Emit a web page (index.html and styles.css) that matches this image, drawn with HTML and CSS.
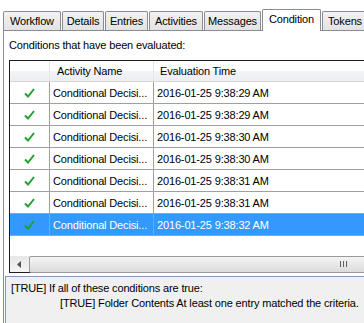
FILE: index.html
```html
<!DOCTYPE html>
<html lang="en">
<head>
  <meta charset="UTF-8" />
  <title>Condition</title>
  <link rel="stylesheet" href="styles.css">
</head>
<body>
  <div class="window">
    <div class="tabs">
      <div class="tab w-workflow">Workflow</div>
      <div class="tab w-details">Details</div>
      <div class="tab w-entries">Entries</div>
      <div class="tab w-activities">Activities</div>
      <div class="tab w-messages">Messages</div>
      <div class="tab active w-condition">Condition</div>
      <div class="tab w-tokens">Tokens</div>
    </div>

    <div class="page">
      <div class="caption">Conditions that have been evaluated:</div>

      <div class="list">
        <div class="row head">
          <div class="cell"></div>
          <div class="cell name">Activity Name</div>
          <div class="cell time">Evaluation Time</div>
          <div class="cell"></div>
        </div>
        <div id="rows"></div>
        <div class="filler"></div>
        <div class="hscroll">
          <div class="arrow">
            <svg width="4" height="7" viewBox="0 0 4 7"><path d="M4 0 L0 3.5 L4 7 Z" fill="#505050"/></svg>
          </div>
          <div class="thumb"><span class="grip"></span></div>
        </div>
      </div>

      <div class="details">
        <div>[TRUE] If all of these conditions are true:</div>
        <div class="indent">[TRUE] Folder Contents At least one entry matched the criteria.</div>
      </div>
    </div>
  </div>

  <script>
    const times = ['9:38:29', '9:38:29', '9:38:30', '9:38:30', '9:38:31', '9:38:31', '9:38:32'];
    const rows = document.getElementById('rows');
    const check = '<svg width="11" height="10" viewBox="0 0 11 10"><path d="M1 5.5 L4 8.5 L10 1" fill="none" stroke="#1fa22c" stroke-width="2"/></svg>';

    times.forEach((t, i) => {
      const row = document.createElement('div');
      row.className = 'row' + (i === times.length - 1 ? ' selected' : '');
      row.innerHTML = `
        <div class="cell icon">${check}</div>
        <div class="cell name">Conditional Decisi...</div>
        <div class="cell time">2016-01-25 ${t} AM</div>
        <div class="cell"></div>
      `;
      rows.appendChild(row);
    });
  </script>
</body>
</html>
```

FILE: styles.css
```css
body {
  margin: 0;
  background: #fff;
  font-family: "Liberation Sans", Arial, sans-serif;
  font-size: 11px;
  letter-spacing: -0.15px;
  color: #000;
  overflow: hidden;
}
.window {
  width: 440px;
  height: 323px;
  padding-left: 3px;
}
.tabs {
  display: flex;
  align-items: flex-end;
  height: 30px;
}
.tab {
  box-sizing: border-box;
  height: 19px;
  padding-top: 3px;
  text-align: center;
  white-space: nowrap;
  border: 1px solid #898c95;
  border-bottom: none;
  border-radius: 2px 2px 0 0;
  background: linear-gradient(#f2f2f2, #e3e3e3);
}
.tab + .tab {
  margin-left: 1px;
}
.tab.active {
  height: 22px;
  margin-bottom: -1px;
  padding-top: 3px;
  background: #fff;
  position: relative;
  z-index: 1;
}
.w-workflow { width: 58px; }
.w-details { width: 42px; }
.w-entries { width: 43px; }
.w-activities { width: 54px; }
.w-messages { width: 57px; }
.w-condition { width: 59px; }
.w-tokens { width: 50px; text-align: left; padding-left: 5px; }

.page {
  border: 1px solid #898c95;
  border-right: none;
  height: 300px;
  padding: 8px 0 0 0;
  box-sizing: border-box;
}
.caption {
  padding-left: 5px;
  line-height: 13px;
  margin-bottom: 8px;
}
.list {
  margin-left: 5px;
  border: 1px solid #1e1e1e;
  border-right: none;
  background: #fff;
}
.row {
  display: grid;
  grid-template-columns: 40px 104px 240px 60px;
  height: 22px;
  box-sizing: border-box;
  border-bottom: 1px solid #a0a0a0;
}
.row .cell {
  border-right: 1px solid #a0a0a0;
  display: flex;
  align-items: center;
  padding-left: 3px;
  white-space: nowrap;
  overflow: hidden;
}
.row.head {
  height: 21px;
  background: linear-gradient(#ffffff 0%, #ffffff 50%, #f3f4f6 51%, #eceef1 100%);
  border-bottom: 1px solid #d5d5d5;
}
.row.head .cell {
  border-right: 1px solid #e3e5e8;
}
.row.head .name {
  padding-left: 7px;
}
.row.head .time {
  padding-left: 6px;
}
.row .icon {
  justify-content: center;
  padding-left: 0;
  padding-top: 1px;
}
.row.selected {
  background: #3399ff;
  color: #fff;
}
.filler {
  height: 20px;
}
.hscroll {
  display: flex;
  height: 16px;
  background: linear-gradient(#e7e7e7, #f4f4f4);
  border-bottom: 1px solid #1e1e1e;
  margin-bottom: -1px;
}
.arrow {
  width: 17px;
  display: flex;
  align-items: center;
  justify-content: center;
}
.thumb {
  flex: 1;
  margin: 0 0 0 2px;
  height: 15px;
  border: 1px solid #9a9a9a;
  border-radius: 2px;
  background: linear-gradient(#f4f4f4, #dcdcdc);
  position: relative;
}
.grip {
  position: absolute;
  left: 310px;
  top: 4px;
  width: 7px;
  height: 6px;
  background: repeating-linear-gradient(90deg, #606060 0 1px, transparent 1px 3px);
}
.details {
  margin: 3px 0 0 1px;
  height: 50px;
  border: 1px solid #7f9db9;
  border-right: none;
  background: #f0f0f0;
  padding: 4px 0 0 5px;
  line-height: 15px;
}
.indent {
  padding-left: 49px;
}
```
